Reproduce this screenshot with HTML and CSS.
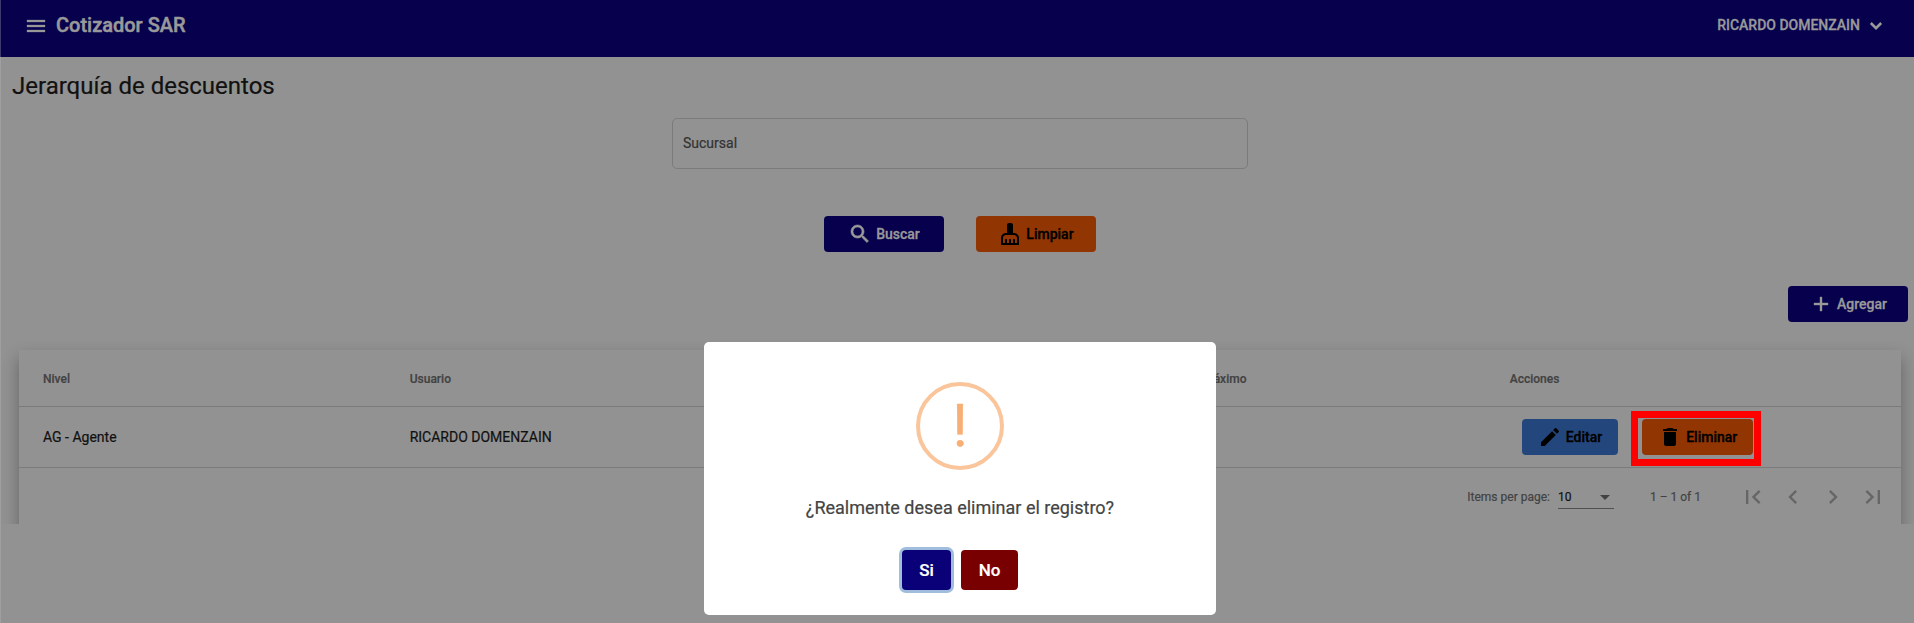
FILE: index.html
```html
<!DOCTYPE html>
<html lang="es">
<head>
<meta charset="utf-8">
<title>Cotizador SAR</title>
<link rel="stylesheet" href="styles.css">
</head>
<body>
<div class="app">
  <header class="topbar">
    <svg class="menu" viewBox="0 0 24 24"><path d="M3 18h18v-2H3v2zm0-5h18v-2H3v2zm0-7v2h18V6H3z"/></svg>
    <span class="brand">Cotizador SAR</span>
    <span class="user">RICARDO DOMENZAIN</span>
    <svg class="caret" viewBox="0 0 14 10"><path d="M1.8 2l5.2 5.2L12.200 2"/></svg>
  </header>
  <main class="content">
    <h1 class="title">Jerarquía de descuentos</h1>
    <div class="field">Sucursal</div>
    <div class="actions">
      <button class="btn navy"><svg class="heavy" viewBox="0 0 24 24"><path d="M15.500 14h-.79l-.28-.27C15.410 12.590 16 11.110 16 9.500 16 5.910 13.090 3 9.500 3S3 5.910 3 9.500 5.910 16 9.500 16c1.610 0 3.090-.59 4.230-1.570l.27.28v.79l5 4.990L20.490 19l-4.990-5zm-6 0C7.010 14 5 11.990 5 9.500S7.010 5 9.500 5 14 7.010 14 9.500 11.990 14 9.500 14z"/></svg>Buscar</button>
      <button class="btn orange"><svg viewBox="0 0 24 24"><path d="M16 11h-1V3c0-1.100-.9-2-2-2h-2c-1.100 0-2 .9-2 2v8H8c-2.760 0-5 2.240-5 5v7h18v-7c0-2.760-2.240-5-5-5zm3 10h-2v-3c0-.55-.45-1-1-1s-1 .45-1 1v3h-2v-3c0-.55-.45-1-1-1s-1 .45-1 1v3H9v-3c0-.55-.45-1-1-1s-1 .45-1 1v3H5v-5c0-1.650 1.350-3 3-3h8c1.650 0 3 1.350 3 3v5z"/></svg>Limpiar</button>
    </div>
    <div class="add">
      <button class="btn navy"><svg class="plus" viewBox="0 0 24 24"><path d="M19 13h-6v6h-2v-6H5v-2h6V5h2v6h6v2z"/></svg>Agregar</button>
    </div>
    <div class="table-area">
      <section class="card">
        <div class="row head"><span>Nivel</span><span>Usuario</span><span></span><span>Descuento máximo</span><span>Acciones</span></div>
        <div class="row data">
          <span>AG - Agente</span><span>RICARDO DOMENZAIN</span><span></span><span></span>
          <div class="row-actions">
            <button class="btn small blue"><svg viewBox="0 0 24 24"><path d="M3 17.250V21h3.750L17.810 9.940l-3.750-3.750L3 17.250zM20.710 7.040c.39-.39.39-1.020 0-1.410l-2.340-2.340c-.39-.39-1.020-.39-1.410 0l-1.830 1.830 3.750 3.750 1.830-1.830z"/></svg>Editar</button>
            <div class="marked">
              <button class="btn small orange"><svg viewBox="0 0 24 24"><path d="M6 19c0 1.100.9 2 2 2h8c1.100 0 2-.9 2-2V7H6v12zM19 4h-3.500l-1-1h-5l-1 1H5v2h14V4z"/></svg>Eliminar</button>
              <div class="frame"></div>
            </div>
          </div>
        </div>
        <div class="pager">
          <span class="per-page">Items per page:</span>
          <span class="select">10<i class="arrow"></i></span>
          <span class="range">1 – 1 of 1</span>
          <div class="nav">
            <svg viewBox="0 0 24 24"><path d="M18.410 16.590L13.820 12l4.590-4.590L17 6l-6 6 6 6zM6 6h2v12H6z"/></svg>
            <svg viewBox="0 0 24 24"><path d="M15.410 7.410L14 6l-6 6 6 6 1.410-1.410L10.830 12z"/></svg>
            <svg viewBox="0 0 24 24"><path d="M10 6L8.590 7.410 13.170 12l-4.580 4.590L10 18l6-6z"/></svg>
            <svg viewBox="0 0 24 24"><path d="M5.590 7.410L10.180 12l-4.590 4.590L7 18l6-6-6-6zM16 6h2v12h-2z"/></svg>
          </div>
        </div>
      </section>
    </div>
  </main>
  <div class="edge"></div>
  <div class="modal">
    <div class="warn">!</div>
    <p class="question">¿Realmente desea eliminar el registro?</p>
    <div class="choices"><button class="choice yes">Si</button><button class="choice no">No</button></div>
  </div>
</div>
</body>
</html>
```
FILE: styles.css
```css
* { box-sizing: border-box; }
body { margin: 0; font-family: Roboto, sans-serif; font-size: 14px; background: #929292; }
.app { position: relative; height: 623px; overflow: hidden; background: #929292; color: #111; -webkit-text-stroke: .2px currentColor; }
.edge { position: absolute; left: 0; top: 0; width: 1px; height: 100%; background: rgba(190, 190, 190, .3); }

.topbar { height: 57px; padding: 0 31px 8px 24px; display: flex; align-items: center; background: #06004d; color: #999; }
.menu { width: 24px; height: 24px; margin-top: 2px; fill: #999; stroke: #999; stroke-width: .3; }
.brand { margin-left: 8px; font-size: 20px; font-weight: 500; line-height: 24px; -webkit-text-stroke-width: .5px; }
.user { margin-left: auto; font-weight: 500; -webkit-text-stroke-width: .3px; }
.caret { width: 14px; height: 10px; margin: 3px 0 0 9px; fill: none; stroke: #999; stroke-width: 2.6; }

.content { display: flex; flex-direction: column; }
.title { margin: 13px 0 0 12px; font-size: 24px; font-weight: 400; line-height: 32px; }
.field { width: 576px; height: 51px; margin: 16px 0 0 672px; padding-left: 10px; border: 1px solid #7b7b7b; border-radius: 5px; line-height: 49px; color: #333; }
.actions { display: flex; gap: 32px; margin: 47px 0 0 824px; }
.add { display: flex; justify-content: flex-end; margin: 34px 6px 0 0; }

.btn { display: flex; align-items: center; justify-content: center; gap: 4px; width: 120px; height: 36px; padding: 0; border: 0; border-radius: 4px; font: 500 14px Roboto, sans-serif; color: #000; -webkit-text-stroke: .3px currentColor; }
.btn svg { width: 24px; height: 24px; fill: currentColor; }
.btn .heavy { stroke: currentColor; stroke-width: .6; }
.btn .plus { stroke: currentColor; stroke-width: .4; }
.navy { background: #06004d; color: #999; }
.orange { background: #913503; }
.blue { background: #23477c; }
.small { width: auto; padding: 0 16px; }

.table-area { height: 202px; padding: 28px 13px 0 19px; overflow: hidden; }
.card { height: 220px; background: #929292; box-shadow: 0 8px 16px rgba(0, 0, 0, .32); }
.row { display: grid; grid-template-columns: 366.7px 366.7px 366.7px 366.7px 1fr; align-items: center; padding-left: 24px; border-bottom: 1px solid #7b7b7b; }
.head { height: 57px; padding-top: 1px; font-size: 12px; font-weight: 500; color: #424242; }
.data { height: 61px; }
.row-actions { display: flex; gap: 24px; padding-left: 12px; }
.marked { position: relative; }
.frame { position: absolute; left: -11px; top: -8px; width: 130px; height: 55px; border: 7px solid #f00; }

.pager { display: flex; align-items: center; justify-content: flex-end; height: 58px; padding-right: 8px; font-size: 12px; color: #424242; }
.select { display: flex; align-items: center; justify-content: space-between; width: 56px; height: 23px; margin: 1px 36px 0 8px; padding-right: 4px; border-bottom: 1px solid #505050; color: #111; }
.arrow { border: 5px solid transparent; border-top-color: #424242; border-bottom: 0; }
.range { margin-right: 38px; }
.nav { display: flex; gap: 12px; padding-right: 6px; }
.nav svg { width: 28px; height: 28px; fill: #666; }

.modal { position: absolute; left: 704px; top: 342px; width: 512px; height: 273px; padding-top: 40px; display: flex; flex-direction: column; align-items: center; border-radius: 5px; background: #fff; }
.warn { width: 88px; height: 88px; border: 4px solid #fac59a; border-radius: 50%; font-size: 60px; line-height: 80px; text-align: center; color: #f7af75; -webkit-text-stroke: .5px #f7af75; }
.question { margin: 26px 0 0; font-size: 18px; line-height: 24px; color: #444; }
.choices { display: flex; gap: 10px; margin-top: 30px; }
.choice { height: 40px; padding: 0; border: 0; border-radius: 4px; font: 500 17px Roboto, sans-serif; color: #fff; -webkit-text-stroke: .2px #fff; }
.yes { width: 49px; background: #0a0078; box-shadow: 0 0 0 3px #a1bddd; }
.no { width: 57px; background: #780000; }
```
